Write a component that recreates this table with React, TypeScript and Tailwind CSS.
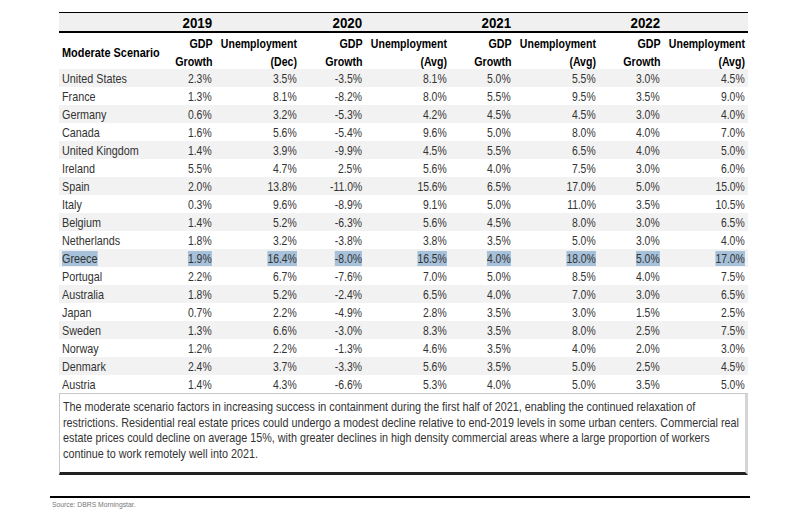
import React from "react"

const rows: [string, string, string, string, string, string, string, string, string][] = [
  ["United States", "2.3%", "3.5%", "-3.5%", "8.1%", "5.0%", "5.5%", "3.0%", "4.5%"],
  ["France", "1.3%", "8.1%", "-8.2%", "8.0%", "5.5%", "9.5%", "3.5%", "9.0%"],
  ["Germany", "0.6%", "3.2%", "-5.3%", "4.2%", "4.5%", "4.5%", "3.0%", "4.0%"],
  ["Canada", "1.6%", "5.6%", "-5.4%", "9.6%", "5.0%", "8.0%", "4.0%", "7.0%"],
  ["United Kingdom", "1.4%", "3.9%", "-9.9%", "4.5%", "5.5%", "6.5%", "4.0%", "5.0%"],
  ["Ireland", "5.5%", "4.7%", "2.5%", "5.6%", "4.0%", "7.5%", "3.0%", "6.0%"],
  ["Spain", "2.0%", "13.8%", "-11.0%", "15.6%", "6.5%", "17.0%", "5.0%", "15.0%"],
  ["Italy", "0.3%", "9.6%", "-8.9%", "9.1%", "5.0%", "11.0%", "3.5%", "10.5%"],
  ["Belgium", "1.4%", "5.2%", "-6.3%", "5.6%", "4.5%", "8.0%", "3.0%", "6.5%"],
  ["Netherlands", "1.8%", "3.2%", "-3.8%", "3.8%", "3.5%", "5.0%", "3.0%", "4.0%"],
  ["Greece", "1.9%", "16.4%", "-8.0%", "16.5%", "4.0%", "18.0%", "5.0%", "17.0%"],
  ["Portugal", "2.2%", "6.7%", "-7.6%", "7.0%", "5.0%", "8.5%", "4.0%", "7.5%"],
  ["Australia", "1.8%", "5.2%", "-2.4%", "6.5%", "4.0%", "7.0%", "3.0%", "6.5%"],
  ["Japan", "0.7%", "2.2%", "-4.9%", "2.8%", "3.5%", "3.0%", "1.5%", "2.5%"],
  ["Sweden", "1.3%", "6.6%", "-3.0%", "8.3%", "3.5%", "8.0%", "2.5%", "7.5%"],
  ["Norway", "1.2%", "2.2%", "-1.3%", "4.6%", "3.5%", "4.0%", "2.0%", "3.0%"],
  ["Denmark", "2.4%", "3.7%", "-3.3%", "5.6%", "3.5%", "5.0%", "2.5%", "4.5%"],
  ["Austria", "1.4%", "4.3%", "-6.6%", "5.3%", "4.0%", "5.0%", "3.5%", "5.0%"],
]

const note = [
  "The moderate scenario factors in increasing success in containment during the first half of 2021, enabling the continued relaxation of",
  "restrictions. Residential real estate prices could undergo a modest decline relative to end-2019 levels in some urban centers. Commercial real",
  "estate prices could decline on average 15%, with greater declines in high density commercial areas where a large proportion of workers",
  "continue to work remotely well into 2021.",
]

const cols = "grid grid-cols-[106px_50px_85px_65px_85px_64px_85px_64px_85px]"
const font = { fontFamily: '"Liberation Sans", Arial, sans-serif' }

// narrow glyphs to mimic the condensed face of the original
function R({ children, hl }: { children: React.ReactNode; hl?: boolean }) {
  return (
    <span className={`inline-block whitespace-nowrap origin-right scale-x-[0.8] ${hl ? "bg-[#a6c1d9]" : ""}`}>{children}</span>
  )
}
function L({ children, hl }: { children: React.ReactNode; hl?: boolean }) {
  return (
    <span className={`inline-block whitespace-nowrap origin-left scale-x-[0.83] ${hl ? "bg-[#a6c1d9]" : ""}`}>{children}</span>
  )
}

export default function App() {
  return (
    <div className="w-[787px] h-[515px] bg-white relative overflow-hidden" style={font}>
      <div className="absolute left-[59px] top-[12px] w-[689px]">
        {/* year band */}
        <div className={`${cols} h-[21px] bg-[#f0f0f0] border-t border-black border-b-2 items-center text-[14px] font-bold text-black`}>
          <div />
          <div className="flex justify-end pr-[3px]"><span className="inline-block origin-right scale-x-[0.95]">2019</span></div>
          <div />
          <div className="flex justify-end pr-[3px]"><span className="inline-block origin-right scale-x-[0.95]">2020</span></div>
          <div />
          <div className="flex justify-end pr-[3px]"><span className="inline-block origin-right scale-x-[0.95]">2021</span></div>
          <div />
          <div className="flex justify-end pr-[3px]"><span className="inline-block origin-right scale-x-[0.95]">2022</span></div>
          <div />
        </div>
        {/* column headers */}
        <div className={`${cols} h-[36px] pt-[2px] text-[13px] font-bold text-black leading-[18px] items-center`}>
          <div className="pl-[3px]"><span className="inline-block whitespace-nowrap origin-left scale-x-[0.84]">Moderate Scenario</span></div>
          {[0, 1, 2, 3].map((i) => (
            <React.Fragment key={i}>
              <div className="flex justify-end pr-[3px]">
                <span className="inline-block text-right whitespace-nowrap origin-right scale-x-[0.82]">GDP<br />Growth</span>
              </div>
              <div className="flex justify-end pr-[3px]">
                <span className="inline-block text-right whitespace-nowrap origin-right scale-x-[0.81]">Unemployment<br />{i === 0 ? "(Dec)" : "(Avg)"}</span>
              </div>
            </React.Fragment>
          ))}
        </div>
        {/* data */}
        {rows.map((r, i) => {
          const hl = r[0] === "Greece"
          return (
            <div
              key={r[0]}
              className={`${cols} h-[18px] items-center text-[13px] leading-[15px] text-[#333] ${i % 2 === 0 ? "bg-[#f2f2f2]" : "bg-white"}`}
            >
              {r.map((c, j) =>
                j === 0 ? (
                  <div key={j} className="pl-[3px]"><L hl={hl}>{c}</L></div>
                ) : (
                  <div key={j} className="flex justify-end pr-[3px]"><R hl={hl}>{c}</R></div>
                )
              )}
            </div>
          )
        })}
        {/* footnote */}
        <div className="h-[82px] border border-[#c8c8c8] border-r-[3px] border-r-[#d4d4d4] border-b-[3px] border-b-[#222] pl-[3px] pt-[5px] text-[13px] leading-[15.5px] text-[#333]">
          {note.map((line) => (
            <div key={line} className="whitespace-nowrap">
              <span className="inline-block origin-left scale-x-[0.83]">{line}</span>
            </div>
          ))}
        </div>
      </div>
      <div className="absolute left-[50px] top-[496px] w-[700px] border-t-2 border-black" />
      <div className="absolute left-[52px] top-[499px] text-[8px] text-[#777]">
        <span className="inline-block origin-left scale-x-[0.85]">Source: DBRS Morningstar.</span>
      </div>
    </div>
  )
}
